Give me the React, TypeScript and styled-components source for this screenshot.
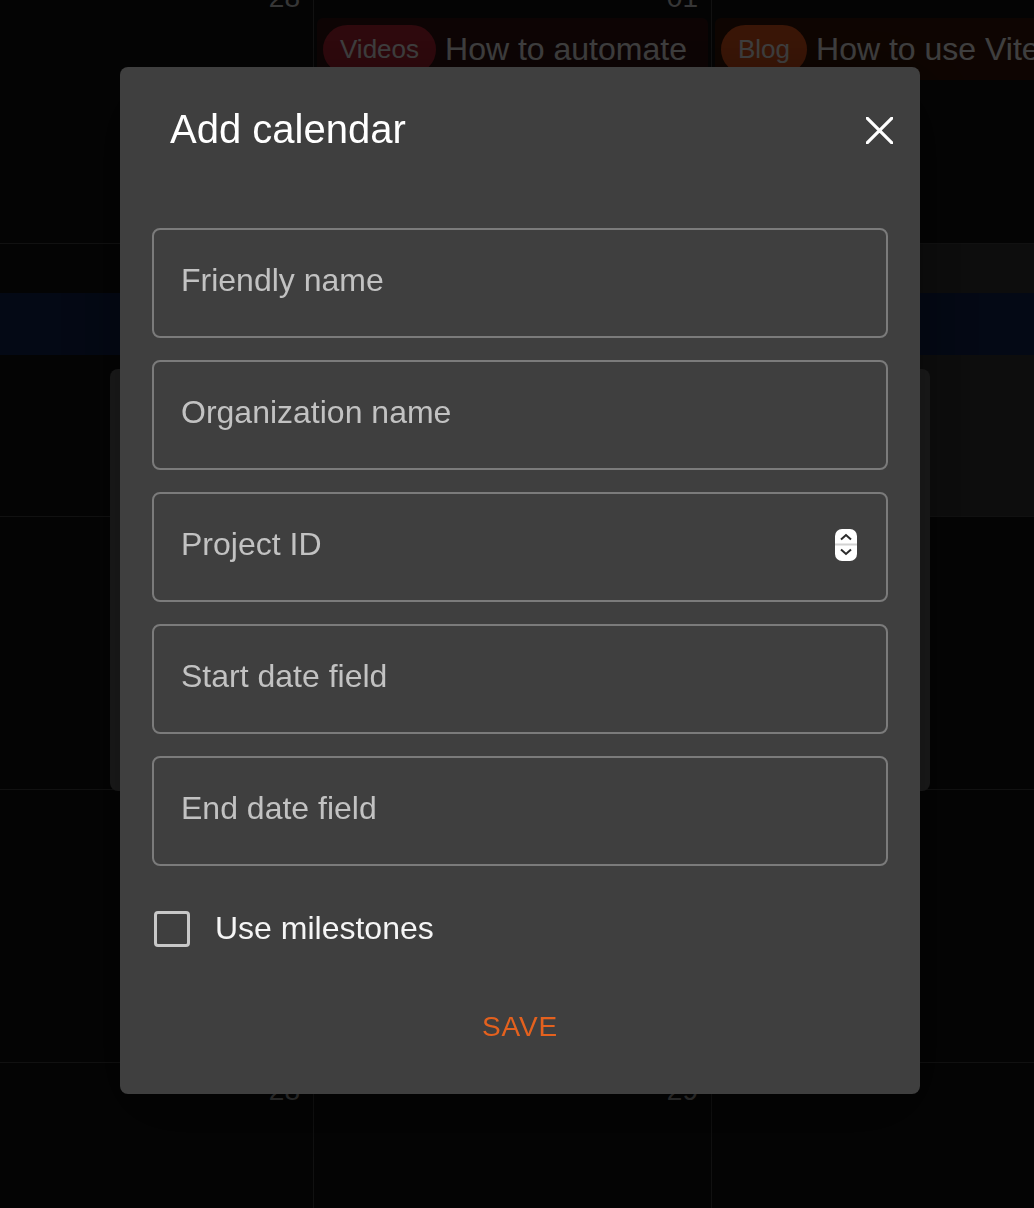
import React from "react";
import styled, { createGlobalStyle } from "styled-components";

const GlobalStyle = createGlobalStyle`
  html, body {
    margin: 0;
    padding: 0;
    background: #121212;
    overflow: hidden;
  }
  body {
    font-family: "Liberation Sans", Arial, Helvetica, sans-serif;
  }
  * {
    box-sizing: border-box;
  }
`;

const Page = styled.div`
  width: 1034px;
  height: 1208px;
  overflow: hidden;
  background: #121212;
`;

const CalendarGrid = styled.div`
  display: grid;
  grid-template-columns: 313px 398px 398px;
  grid-auto-rows: 273px;
  margin-top: -30px;
`;

const DayCell = styled.div<{ $col: number; $row: number; $today?: boolean }>`
  grid-column: ${p => p.$col + 1};
  grid-row: ${p => p.$row + 1};
  border-left: ${p => (p.$col > 0 ? "1px solid #474747" : "none")};
  border-top: ${p => (p.$row > 0 ? "1px solid #474747" : "none")};
  background: ${p => (p.$today ? "#363636" : "transparent")};
  display: flex;
  flex-direction: column;
  padding: 12px 3px 0 3px;
  overflow: hidden;
`;

const DayNumber = styled.div`
  height: 32px;
  font-size: 28px;
  line-height: 32px;
  color: #d8d8d8;
  text-align: right;
  padding-right: 10px;
`;

const EventChip = styled.div<{ $tone: string }>`
  display: flex;
  align-items: center;
  gap: 9px;
  height: 62px;
  margin-top: 4px;
  padding: 0 6px;
  background: ${p => p.$tone};
  border-radius: 6px;
  white-space: nowrap;
  overflow: hidden;
`;

const Tag = styled.span<{ $color: string }>`
  display: flex;
  align-items: center;
  height: 49px;
  padding: 0 17px;
  border-radius: 25px;
  background: ${p => p.$color};
  color: #fff;
  font-size: 26px;
  flex-shrink: 0;
`;

const EventTitle = styled.span`
  font-size: 32px;
  color: #fff;
`;

const WeekBand = styled.div<{ $row: number }>`
  grid-column: 1 / -1;
  grid-row: ${p => p.$row + 1};
  align-self: start;
  margin-top: 50px;
  height: 62px;
  background: #112454;
`;

const Backdrop = styled.div`
  position: fixed;
  inset: 0;
  background: rgba(0, 0, 0, 0.5);
  display: flex;
  align-items: center;
  justify-content: center;
  padding: 0 0 48px 6px;
`;

const BackDialog = styled.div`
  width: 820px;
  height: 422px;
  background: #383838;
  border-radius: 8px;
`;

const Dialog = styled.div`
  width: 800px;
  background: #3f3f3f;
  border-radius: 8px;
  padding: 28px 32px 35px;
  display: flex;
  flex-direction: column;
  box-shadow: 0 22px 70px rgba(0, 0, 0, 0.4);
`;

const Header = styled.div`
  display: flex;
  align-items: center;
  height: 64px;
  padding-left: 18px;
`;

const Title = styled.h2`
  margin: 0;
  padding-top: 5px;
  font-size: 40px;
  font-weight: 400;
  line-height: 64px;
  color: #fff;
`;

const CloseButton = styled.button`
  margin-left: auto;
  margin-right: -5px;
  margin-top: 7px;
  width: 27px;
  height: 27px;
  padding: 0;
  border: none;
  background: none;
  display: flex;
  cursor: pointer;
`;

const Form = styled.div`
  display: flex;
  flex-direction: column;
  gap: 22px;
  margin-top: 69px;
`;

const Field = styled.label`
  display: flex;
  align-items: center;
  height: 110px;
  border: 2px solid #7b7b7b;
  border-radius: 8px;
  padding: 0 29px 4px 27px;
`;

const FieldInput = styled.input`
  flex: 1;
  min-width: 0;
  background: transparent;
  border: none;
  outline: none;
  padding: 0;
  font: 32px "Liberation Sans", Arial, sans-serif;
  color: #fff;
  &::placeholder {
    color: #c2c2c2;
    opacity: 1;
  }
`;

const CheckRow = styled.label`
  display: flex;
  align-items: center;
  gap: 25px;
  height: 64px;
  margin-top: 31px;
  padding-left: 2px;
  cursor: pointer;
`;

const CheckBox = styled.span`
  width: 36px;
  height: 36px;
  border: 3px solid #c8c8c8;
  border-radius: 4px;
`;

const CheckLabel = styled.span`
  font-size: 32px;
  color: #f5f5f5;
`;

const Actions = styled.div`
  display: flex;
  justify-content: center;
  margin-top: 34px;
`;

const SaveButton = styled.button`
  height: 64px;
  padding: 0 16px;
  border: none;
  background: none;
  color: #e4611e;
  font: 28px "Liberation Sans", Arial, sans-serif;
  letter-spacing: 0.8px;
  text-transform: uppercase;
  cursor: pointer;
`;

const CloseIcon = () => (
  <svg width="27" height="27" viewBox="0 0 27 27">
    <path d="M0 0 L27 27 M27 0 L0 27" stroke="#fff" strokeWidth="3.2" />
  </svg>
);

const Spinner = () => (
  <svg width="22" height="32" viewBox="0 0 22 32">
    <rect x="0" y="0" width="22" height="32" rx="7" fill="#fff" />
    <rect x="0" y="14.5" width="22" height="2" fill="#d2d2d2" />
    <path d="M6 10.5 L11 6 L16 10.5" fill="none" stroke="#2b2b2b" strokeWidth="2" />
    <path d="M6 20.5 L11 25 L16 20.5" fill="none" stroke="#2b2b2b" strokeWidth="2" />
  </svg>
);

const weeks = [
  ["27", "28", "01"],
  ["06", "07", "08"],
  ["13", "14", "15"],
  ["20", "21", "22"],
  ["27", "28", "29"],
];

const App: React.FC = () => {
  return (
    <Page>
      <GlobalStyle />
      <CalendarGrid>
        {weeks.map((days, row) =>
          days.map((day, col) => (
            <DayCell key={`${row}-${col}`} $row={row} $col={col} $today={row === 1 && col === 2}>
              <DayNumber>{col === 0 ? days[1] : col === 1 ? days[2] : ""}</DayNumber>
              {row === 0 && col === 1 && (
                <EventChip $tone="#351212">
                  <Tag $color="#bc2535">Videos</Tag>
                  <EventTitle>How to automate</EventTitle>
                </EventChip>
              )}
              {row === 0 && col === 2 && (
                <EventChip $tone="#3a1608">
                  <Tag $color="#ea581c">Blog</Tag>
                  <EventTitle>How to use Vite</EventTitle>
                </EventChip>
              )}
            </DayCell>
          ))
        )}
        <WeekBand $row={1} />
      </CalendarGrid>

      <Backdrop>
        <BackDialog />
      </Backdrop>

      <Backdrop>
        <Dialog role="dialog">
          <Header>
            <Title>Add calendar</Title>
            <CloseButton aria-label="close">
              <CloseIcon />
            </CloseButton>
          </Header>
          <Form>
            <Field>
              <FieldInput placeholder="Friendly name" />
            </Field>
            <Field>
              <FieldInput placeholder="Organization name" />
            </Field>
            <Field>
              <FieldInput placeholder="Project ID" />
              <Spinner />
            </Field>
            <Field>
              <FieldInput placeholder="Start date field" />
            </Field>
            <Field>
              <FieldInput placeholder="End date field" />
            </Field>
          </Form>
          <CheckRow>
            <CheckBox />
            <CheckLabel>Use milestones</CheckLabel>
          </CheckRow>
          <Actions>
            <SaveButton>Save</SaveButton>
          </Actions>
        </Dialog>
      </Backdrop>
    </Page>
  );
};

export default App;
